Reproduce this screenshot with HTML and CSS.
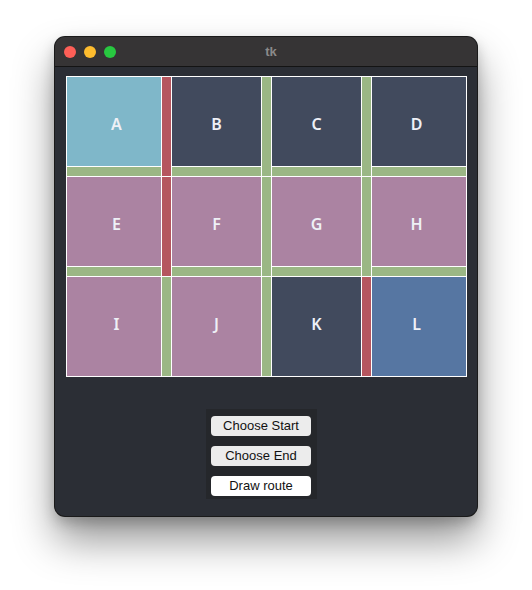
FILE: index.html
```html
<!DOCTYPE html>
<html>
<head>
<meta charset="utf-8">
<link rel="stylesheet" href="styles.css">
</head>
<body>
<div class="window">
  <div class="titlebar">
    <div class="lights">
      <span class="light red"></span>
      <span class="light yellow"></span>
      <span class="light green"></span>
    </div>
    <div class="title">tk</div>
  </div>
  <div class="content">
    <div class="grid">
      <div class="cell c-a r1 first">A</div>
      <div class="wall red-w vspan"></div>
      <div class="cell c-dark r1">B</div>
      <div class="wall green-w vspan"></div>
      <div class="cell c-dark r1">C</div>
      <div class="wall green-w vspan"></div>
      <div class="cell c-dark r1 last">D</div>

      <div class="wall green-w"></div>
      <div class="wall green-w"></div>
      <div class="wall green-w"></div>
      <div class="wall green-w"></div>

      <div class="cell c-pink r2 first">E</div>
      <div class="wall red-w vspan"></div>
      <div class="cell c-pink r2">F</div>
      <div class="wall green-w vspan"></div>
      <div class="cell c-pink r2">G</div>
      <div class="wall green-w vspan"></div>
      <div class="cell c-pink r2 last">H</div>

      <div class="wall green-w"></div>
      <div class="wall green-w"></div>
      <div class="wall green-w"></div>
      <div class="wall green-w"></div>

      <div class="cell c-pink r3 first">I</div>
      <div class="wall green-w"></div>
      <div class="cell c-pink r3">J</div>
      <div class="wall green-w"></div>
      <div class="cell c-dark r3">K</div>
      <div class="wall red-w"></div>
      <div class="cell c-blue r3 last">L</div>
    </div>
    <div class="panel">
      <button class="btn">Choose Start</button>
      <button class="btn">Choose End</button>
      <button class="btn btn-white">Draw route</button>
    </div>
  </div>
</div>
</body>
</html>
```

FILE: styles.css
```css
html, body {
  margin: 0;
  padding: 0;
  background: #ffffff;
}
body {
  padding: 37px 0 0 55px;
  width: 532px;
  height: 590px;
  box-sizing: border-box;
  overflow: hidden;
}
.window {
  width: 422px;
  height: 479px;
  background: #2b2e35;
  border-radius: 10px;
  overflow: hidden;
  box-shadow: 0 0 0 1px #1a1a1a, 0 24px 42px rgba(0,0,0,0.42), 0 6px 14px rgba(0,0,0,0.22);
  display: flex;
  flex-direction: column;
}
.titlebar {
  height: 29px;
  background: #363435;
  border-bottom: 1px solid #141414;
  display: flex;
  align-items: center;
  position: relative;
  flex-shrink: 0;
}
.lights {
  display: flex;
  gap: 8px;
  padding-left: 9px;
}
.light {
  width: 12px;
  height: 12px;
  border-radius: 50%;
  display: block;
}
.light.red { background: #fe5f57; }
.light.yellow { background: #febc2e; }
.light.green { background: #28c840; }
.title {
  position: absolute;
  left: 0;
  right: 0;
  top: 0;
  line-height: 29px;
  text-align: center;
  font-family: "Liberation Sans", Arial, sans-serif;
  font-weight: bold;
  font-size: 13px;
  color: #8b8a8a;
  padding-left: 10px;
}
.content {
  padding: 9px 0 0 11px;
}
.grid {
  display: grid;
  grid-template-columns: 94px 9px 89px 9px 89px 9px 94px;
  grid-template-rows: 89px 9px 89px 9px 99px;
  gap: 1px;
  padding: 1px;
  background: #ffffff;
  width: 401px;
  box-sizing: border-box;
}
.cell {
  display: flex;
  align-items: center;
  justify-content: center;
  font-family: "Noto Sans", "DejaVu Sans", sans-serif;
  font-weight: 600;
  font-size: 16px;
  color: #eef0f6;
  box-sizing: border-box;
}
.r1, .r2 { padding-top: 4px; }
.r3 { padding-bottom: 6px; }
.first { padding-left: 5px; }
.last { padding-right: 5px; }
.c-a { background: #7fb7c9; }
.c-dark { background: #414a5d; }
.c-pink { background: #ab83a2; }
.c-blue { background: #5676a2; }
.wall.red-w { background: #b5565f; }
.wall.green-w { background: #9bb785; }
.vspan { grid-row: span 2; }
.panel {
  margin: 32px 0 0 140px;
  width: 111px;
  padding: 7px 0 3px 5px;
  box-sizing: border-box;
  background: #25272b;
  display: flex;
  flex-direction: column;
  gap: 10px;
}
.btn {
  width: 100px;
  height: 20px;
  border: none;
  border-radius: 4px;
  background: #ececec;
  font-family: "Liberation Sans", Arial, sans-serif;
  font-size: 13px;
  color: #111;
  padding: 0;
  margin: 0;
  line-height: 20px;
}
.btn-white { background: #ffffff; }
```
